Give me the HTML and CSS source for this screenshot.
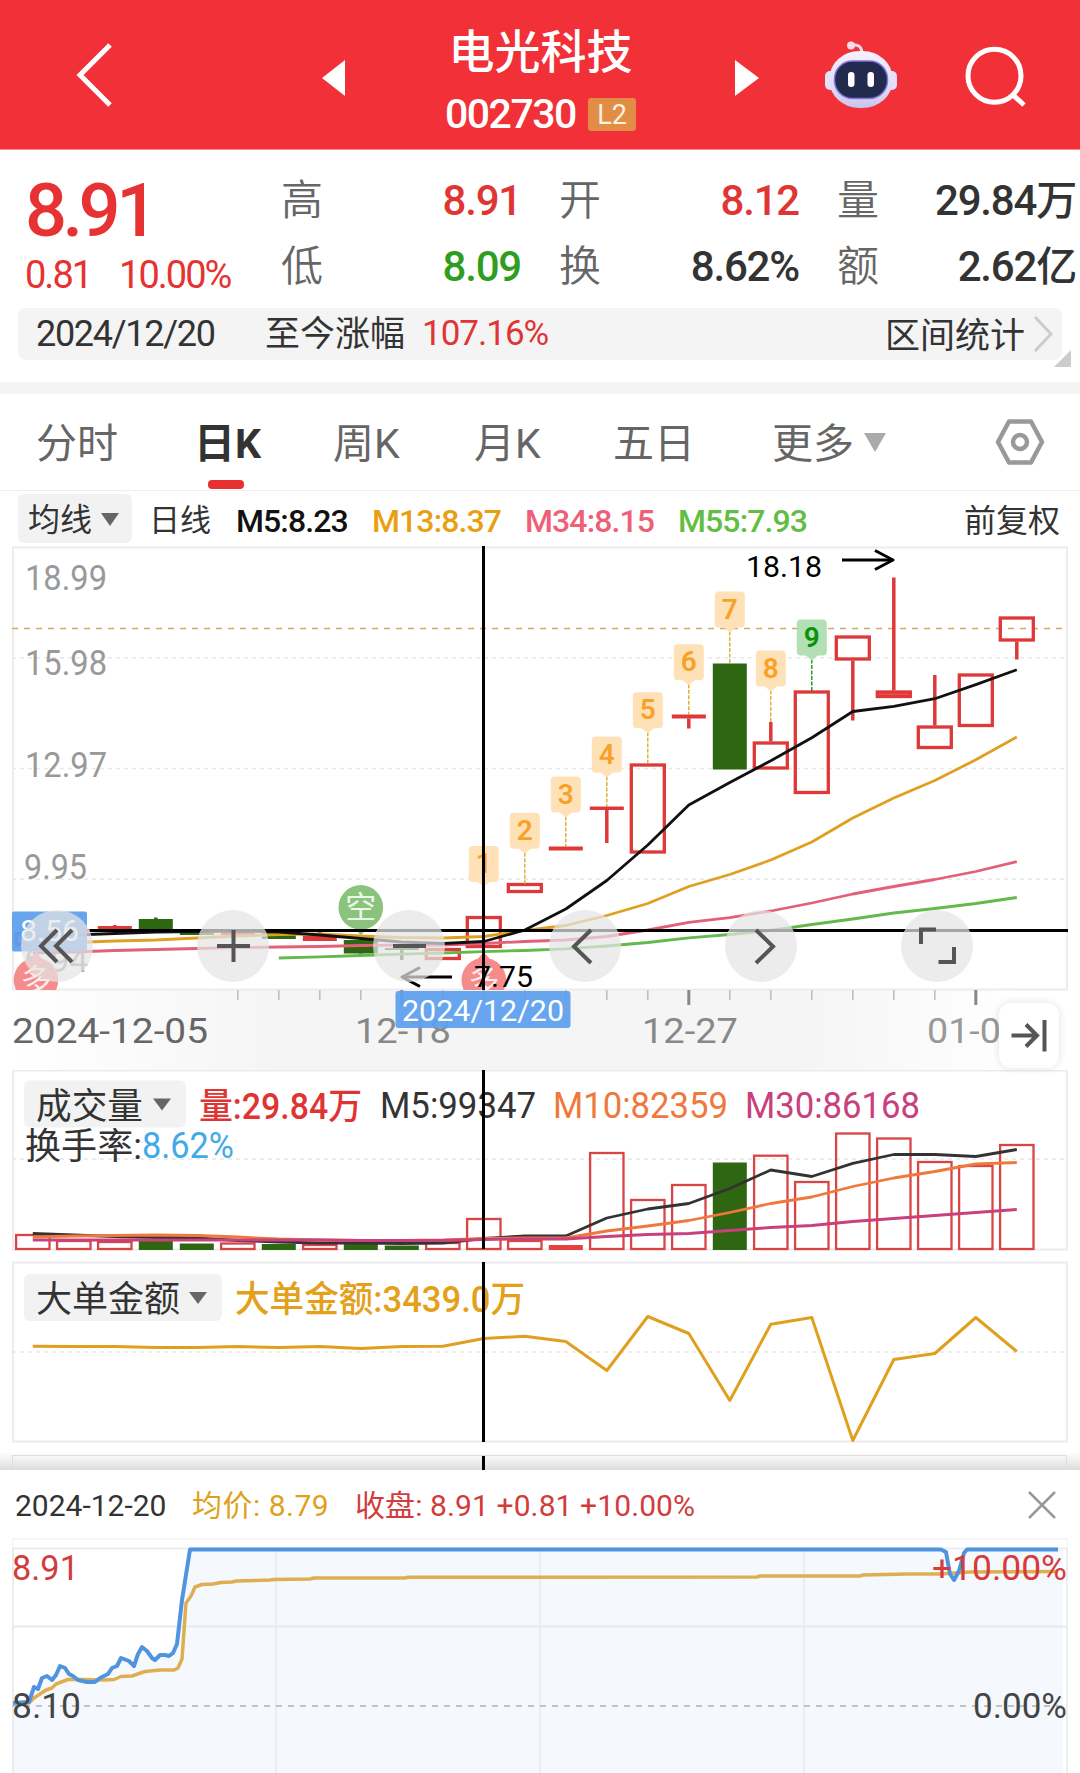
FILE: index.html
```html
<!DOCTYPE html>
<html lang="zh-CN">
  <head>
    <meta charset="UTF-8" />
    <meta name="viewport" content="width=device-width, initial-scale=1.0" />
    <title>电光科技 002730</title>
    <link rel="stylesheet" href="styles.css">
  </head>
  <body>
    <header class="topbar">
      <svg class="back" width="44" height="72" viewBox="0 0 44 72"><path d="M37 6 L7 36 L37 66" /></svg>
      <svg class="arrow" width="24" height="36" viewBox="0 0 24 36"><path d="M23 0 V36 L0 18 Z" /></svg>
      <div class="stock">
        <h1>电光科技</h1>
        <p><span class="code">002730</span><span class="level">L2</span></p>
      </div>
      <svg class="arrow" width="24" height="36" viewBox="0 0 24 36"><path d="M0 0 V36 L24 18 Z" /></svg>
      <svg class="robot" width="74" height="70" viewBox="824 40 74 70">
        <defs>
          <linearGradient id="shell" x1="0" y1="0" x2="0" y2="1">
            <stop offset="0" stop-color="#f6f2ff" />
            <stop offset="0.7" stop-color="#dcd8f6" />
            <stop offset="1" stop-color="#c9c4ec" />
          </linearGradient>
        </defs>
        <path d="M853 45 Q862 44 862 54" fill="none" stroke="#f0dcea" stroke-width="3" />
        <circle cx="851" cy="45.5" r="4" fill="#f5dce6" />
        <rect x="825" y="71" width="12" height="19" rx="5" fill="#e4e0fa" />
        <rect x="885" y="71" width="12" height="19" rx="5" fill="#e4e0fa" />
        <rect x="829.5" y="51" width="63" height="57" rx="30" ry="27" fill="url(#shell)" />
        <rect x="834.5" y="61" width="53" height="37.5" rx="18" fill="#222a4e" stroke="#8276dc" stroke-width="1.5" />
        <rect x="848" y="72" width="6.5" height="15" rx="3.2" fill="#fff" />
        <rect x="867.5" y="72" width="6.5" height="15" rx="3.2" fill="#fff" />
      </svg>
      <svg class="search" width="64" height="64" viewBox="964 46 64 64">
        <circle cx="994.5" cy="75.7" r="26.5" />
        <path d="M1013 95 L1024 105" />
      </svg>
    </header>

    <section class="quote">
      <div class="price">
        <strong>8.91</strong>
        <p><span>0.81</span><span>10.00%</span></p>
      </div>
      <dl class="figures">
        <dt>高</dt><dd class="up">8.91</dd>
        <dt>开</dt><dd class="up">8.12</dd>
        <dt>量</dt><dd>29.84<i>万</i></dd>
        <dt>低</dt><dd class="down">8.09</dd>
        <dt>换</dt><dd>8.62%</dd>
        <dt>额</dt><dd>2.62<i>亿</i></dd>
      </dl>
    </section>

    <section class="range">
      <div class="range-bar">
        <span class="day">2024/12/20</span>
        <span class="since">至今涨幅</span>
        <span class="rise">107.16%</span>
        <span class="stats">区间统计</span>
        <svg width="22" height="36" viewBox="0 0 22 36"><path d="M2 1 L18 18 L2 35" /></svg>
      </div>
      <i class="corner"></i>
    </section>

    <nav class="tabs">
      <span>分时</span>
      <span class="active">日K</span>
      <span>周K</span>
      <span>月K</span>
      <span>五日</span>
      <span>更多<i class="caret"></i></span>
      <svg width="52" height="48" viewBox="0 0 52 48">
        <path d="M15 3.5 H37 L48 24 L37 44.5 H15 L4 24 Z" />
        <circle cx="26" cy="24" r="7" />
      </svg>
    </nav>

    <section class="averages">
      <span class="chip">均线<i class="caret"></i></span>
      <span class="line-type">日线</span>
      <span class="m5">M5:8.23</span>
      <span class="m13">M13:8.37</span>
      <span class="m34">M34:8.15</span>
      <span class="m55">M55:7.93</span>
      <span class="adjust">前复权</span>
    </section>

    <main class="charts">
      <svg id="kline" width="1080" height="524" viewBox="0 546 1080 524"></svg>
      <svg id="volume" width="1080" height="190" viewBox="0 1070 1080 190"></svg>
      <svg id="orders" width="1080" height="192" viewBox="0 1260 1080 192"></svg>
      <div class="next-panel"><i></i></div>

      <div class="tools">
        <button><svg viewBox="0 0 72 72"><path d="M36 20 L20 36 L36 52 M51 20 L35 36 L51 52" /></svg></button>
        <button><svg viewBox="0 0 72 72"><path d="M20 36 H53 M36.5 20 V52" /></svg></button>
        <button><svg viewBox="0 0 72 72"><path d="M20 36 H53" /></svg></button>
        <button><svg viewBox="0 0 72 72"><path d="M42 20 L25 36.5 L42 53" /></svg></button>
        <button><svg viewBox="0 0 72 72"><path d="M31 20 L48 36.5 L31 53" /></svg></button>
        <button><svg viewBox="0 0 72 72"><path d="M20 34 V19.5 H35 M53 37 V52 H37.5" /></svg></button>
      </div>
      <button class="to-end"><svg viewBox="0 0 60 65"><path d="M12.5 32.5 H38 M27 21.5 L38 32.5 L27 43.5 M45.5 17 V48.5" /></svg></button>
    </main>

    <section class="sheet">
      <div class="sheet-head">
        <span>2024-12-20</span>
        <span class="avg">均价: 8.79</span>
        <span class="close-price">收盘: 8.91 +0.81 +10.00%</span>
        <svg width="28" height="28" viewBox="0 0 28 28"><path d="M1 1 L27 27 M27 1 L1 27" /></svg>
      </div>
      <svg id="intraday" width="1080" height="235" viewBox="0 1538 1080 235"></svg>
    </section>

    <script src="script.js"></script>
  </body>
</html>
```
FILE: styles.css
```css
body {
  margin: 0;
  width: 1080px;
  height: 1773px;
  overflow: hidden;
  background-color: #fff;
  color: #333;
  font-family: Roboto, "Noto Sans CJK SC", sans-serif;
}

h1,
p,
dl,
dd {
  margin: 0;
}

i {
  font-style: normal;
}

svg {
  display: block;
}

button {
  border: none;
  padding: 0;
}

/* top bar */
.topbar {
  display: grid;
  grid-template-columns: 322px 24px 389px 24px 65px 74px 66px 64px;
  height: 149px;
  background-color: #f23038;
  border-bottom: 1px solid #f88a8e;
  color: #fff;
}

.back {
  margin: 39px 0 0 73px;
  fill: none;
  stroke: #fff;
  stroke-width: 5;
}

.arrow {
  margin-top: 60px;
  fill: #fff;
}

.robot {
  grid-column: 6;
  margin-top: 40px;
}

.search {
  grid-column: 8;
  margin-top: 46px;
  fill: none;
  stroke: #fff;
  stroke-width: 5;
}

.stock {
  text-align: center;
}

.stock h1 {
  margin-top: 22px;
  height: 60px;
  line-height: 60px;
  font-size: 46px;
  font-weight: 500;
}

.stock p {
  display: flex;
  align-items: center;
  margin: 9px 0 0 99px;
  height: 46px;
}

.code {
  width: 143px;
  text-align: left;
  font-size: 41px;
  font-weight: 500;
  letter-spacing: -1.5px;
}

.level {
  width: 48px;
  height: 33px;
  line-height: 34px;
  border-radius: 3px;
  background-color: #e28d45;
  color: #fff2de;
  font-size: 27px;
}

/* quote */
.quote {
  display: flex;
  height: 158px;
}

.price {
  width: 256px;
  padding-left: 25px;
  color: #e63232;
}

.price strong {
  display: block;
  margin-top: 19px;
  height: 85px;
  line-height: 84px;
  font-size: 74px;
  font-weight: 500;
  letter-spacing: -4.5px;
}

.price p {
  display: flex;
  gap: 28px;
  line-height: 43px;
  font-size: 38px;
  letter-spacing: -2px;
}

.figures {
  display: grid;
  grid-template-columns: 42px 198px 38px 42px 198px 38px 42px 197px;
  grid-template-rows: 66px 66px;
  padding-top: 18px;
  line-height: 66px;
}

.figures dt {
  font-size: 42px;
  font-weight: 350;
  color: #666;
}

.figures dt:nth-of-type(3n + 2) {
  grid-column: 4;
}

.figures dt:nth-of-type(3n) {
  grid-column: 7;
}

.figures dd {
  text-align: right;
  font-size: 42px;
  font-weight: 500;
  letter-spacing: -1.2px;
  white-space: nowrap;
}

.figures i {
  font-size: 41px;
}

.up {
  color: #e03535;
}

.down {
  color: #2f9d20;
}

.range {
  position: relative;
  height: 74px;
  border-bottom: 12px solid #f4f4f4;
}

.range-bar {
  display: flex;
  align-items: center;
  margin: 0 18px;
  height: 52px;
  line-height: 52px;
  border-radius: 8px;
  background-color: #f4f4f4;
  font-size: 35px;
}

.day {
  width: 229px;
  padding-left: 18px;
  font-size: 36px;
  letter-spacing: -1.3px;
}

.since {
  width: 157px;
  padding-top: 2px;
}

.rise {
  color: #e03535;
  letter-spacing: -1px;
}

.stats {
  margin: 6px 8px 0 auto;
}

.range-bar svg {
  margin: 0 7px 0 0;
  fill: none;
  stroke: #ccc;
  stroke-width: 3;
}

.corner {
  position: absolute;
  left: 1054px;
  top: 42px;
  border-left: 17px solid transparent;
  border-bottom: 17px solid #ccc;
}

/* period tabs */
.tabs {
  display: grid;
  grid-template-columns: 160px 137px 141px 139px 159px 222px 52px;
  height: 96px;
  padding-left: 36px;
  line-height: 100px;
  border-bottom: 1px solid #eee;
  font-size: 41px;
  color: #666;
}

.caret {
  display: inline-block;
  margin-left: 9px;
  border: 11px solid transparent;
  border-top: 19px solid #aaa;
  border-bottom: none;
}

.tabs .caret {
  margin-left: 10px;
  vertical-align: 6px;
}

.tabs .active {
  margin-left: -2px;
  color: #333;
  font-weight: 700;
}

.active::after {
  content: "";
  display: block;
  width: 36px;
  height: 9px;
  margin: -14px 0 0 14px;
  border-radius: 4px;
  background-color: #e63030;
}

.tabs svg {
  margin-top: 24px;
  fill: none;
  stroke: #999;
  stroke-width: 4.5;
  stroke-linejoin: round;
}

/* moving average row */
.averages {
  display: grid;
  grid-template-columns: 131px 87px 136px 153px 153px 286px 100px;
  height: 55px;
  padding-left: 18px;
  line-height: 60px;
  font-size: 32px;
  font-weight: 500;
  letter-spacing: -0.9px;
}

.chip {
  width: 104px;
  height: 49px;
  margin-top: 3px;
  padding-left: 10px;
  line-height: 52px;
  border-radius: 6px;
  background-color: #f2f2f2;
  font-weight: 400;
  letter-spacing: 0;
}

.chip .caret {
  border-width: 13px 9px 0;
  border-top-color: #666;
  vertical-align: 5px;
}

.line-type,
.adjust {
  font-weight: 400;
  font-size: 31px;
  letter-spacing: 0;
}

.adjust {
  font-size: 32px;
}

.m5 {
  color: #111;
}

.m13 {
  color: #e8a010;
}

.m34 {
  color: #ee6078;
}

.m55 {
  color: #62be42;
}

/* charts */
.charts {
  position: relative;
  height: 924px;
}

.tools {
  position: absolute;
  left: 21px;
  top: 364px;
  display: flex;
  gap: 104px;
}

.tools button {
  width: 72px;
  height: 72px;
  border-radius: 50%;
  background-color: rgba(229, 229, 229, 0.72);
}

.tools svg,
.to-end svg {
  fill: none;
  stroke: #555;
  stroke-width: 4;
}

.to-end {
  position: absolute;
  left: 999px;
  top: 457px;
  width: 60px;
  height: 65px;
  border-radius: 12px;
  background-color: #fff;
  box-shadow: 0 0 8px rgba(0, 0, 0, 0.12);
}

.next-panel {
  height: 18px;
  background: linear-gradient(#fff, #ddd);
}

.next-panel::before {
  content: "";
  display: block;
  width: 1053px;
  height: 14px;
  margin-left: 12px;
  border: 1px solid #dedede;
  border-width: 1px 1px 0;
  transform: translateY(3px);
}

.next-panel i {
  display: block;
  width: 3px;
  height: 15px;
  margin: -12px 0 0 482px;
  background-color: #000;
}

/* intraday sheet */
.sheet {
  position: relative;
  height: 303px;
  background-color: #fff;
}

.sheet-head {
  display: grid;
  grid-template-columns: 177px 163px 673px 28px;
  height: 68px;
  padding-left: 15px;
  line-height: 71px;
  font-size: 30px;
}

.sheet-head svg {
  margin-top: 21px;
  stroke: #999;
  stroke-width: 2.5;
}

.avg {
  color: #dfa020;
  letter-spacing: 0.5px;
}

.close-price {
  color: #d23c3c;
  letter-spacing: 0.1px;
}
```
FILE: script.js
```js
const STEP = 41;
const px = (i) => 32.8 + i * STEP;
const RED = "#de3838";
const GREEN = "#2f6612";

const line = (x1, y1, x2, y2, color, w = 2, dash = "") =>
  `<line x1="${x1}" y1="${y1}" x2="${x2}" y2="${y2}" stroke="${color}" stroke-width="${w}" stroke-dasharray="${dash}"/>`;

const rect = (x, y, w, h, fill, extra = "") =>
  `<rect x="${x}" y="${y}" width="${w}" height="${h}" fill="${fill}" ${extra}/>`;

// text stretched between its left and right edges
const label = (str, x1, x2, y, size, color, weight = 400) =>
  `<text x="${x1}" y="${y}" font-size="${size}" fill="${color}" font-weight="${weight}" textLength="${x2 - x1}" lengthAdjust="spacingAndGlyphs">${str}</text>`;

const poly = (pts, color, w = 2.8) =>
  `<polyline points="${pts.map((p) => p.join(",")).join(" ")}" fill="none" stroke="${color}" stroke-width="${w}" stroke-linejoin="round"/>`;

const series = (ys, color, start = 0, w = 2.8) =>
  poly(ys.map((y, i) => [px(i + start), y]), color, w);

const frame = (top, bottom) =>
  rect(13, top, 1054, bottom - top, "none", 'stroke="#ececec" stroke-width="2"');

const grid = (y) => line(12, y, 1067, y, "#e8e8e8", 1.5, "4 4");

/* ---------- daily K ---------- */
// [body top, body bottom, high, low, style]  h: hollow, r: red, g: green
const candles = [
  [932, 946, 932, 946, "h"], [929, 932, 929, 932, "r"], [926, 930, 925, 930, "r"],
  [919, 930, 917.5, 930, "g"], [931, 935, 931, 935, "g"], [930, 935, 930, 935, "r"],
  [932, 939, 932, 939, "g"], [936, 941, 932, 941, "r"], [940, 953.5, 940, 955, "g"],
  [948, 950, 948, 960, "g"], [948, 960, 948, 960, "h"], [916, 948, 916, 948, "h"],
  [883, 893, 883, 893, "h"], [846.5, 850.5, 846.5, 850.5, "r"], [806.5, 810, 806.5, 843, "r"],
  [763.5, 853.5, 763.5, 853.5, "h"], [714.5, 718.5, 714.5, 728.5, "r"], [663.5, 769.5, 663.5, 769.5, "g"],
  [741.5, 769.5, 722, 769.5, "h"], [690.5, 794, 690.5, 794, "h"], [635.5, 660.5, 635.5, 720.5, "h"],
  [690.5, 698, 577.5, 698, "h"], [725.5, 749, 675, 749, "h"], [673.5, 727, 673.5, 727, "h"],
  [616.5, 641.5, 616.5, 659.5, "h"],
];

const ma5 = [936, 935, 933.5, 932, 931.5, 931, 932, 935, 938.5, 942, 943.5, 941.5, 930, 909, 880.5, 845, 805, 782.5, 760.7, 737.7, 711.5, 706.3, 698.7, 684.6, 669.8];
const ma13 = [944, 942.5, 941, 940, 938, 936, 934.5, 934, 936, 937.5, 938, 936.5, 930.5, 925.5, 915.5, 903.5, 886.5, 874.5, 860, 842, 818, 798, 780.5, 759.8, 737];
const ma34 = [953, 952, 950.5, 949.5, 948.5, 947.5, 947, 946.5, 945.5, 945.2, 945, 943.5, 941.5, 940, 936.5, 930, 922.3, 917.6, 911, 903, 894, 886.5, 879.5, 871.5, 861.7];
const ma55 = [958, 956.8, 955.5, 954.2, 953, 951.6, 950.5, 948.8, 946, 942.5, 937.8, 934.5, 930.5, 924.5, 919, 913, 908.5, 903.5, 897.5];

// nine-turn counters: top of the badge, end of the dotted lead
const turns = [
  [846, 887], [812.8, 884], [776.5, 847], [736.5, 807], [692.3, 764],
  [644.3, 715], [591.6, 664], [650.5, 722], [619.5, 691],
];

function drawCandle([top, bottom, high, low, style], i) {
  const x = px(i);
  const color = style === "g" ? GREEN : RED;
  let out = "";
  if (high < top) out += line(x, high, x, top, color, 3.5);
  if (low > bottom) out += line(x, bottom, x, low, color, 3.5);
  if (style === "h") {
    out += rect(x - 16.5, top + 1.5, 33, bottom - top - 3, bottom - top < 8 ? "#f05050" : "none", `stroke="${color}" stroke-width="3.3"`);
  } else {
    out += rect(x - 17, top, 34, bottom - top, color);
  }
  return out;
}

function drawTurn([top, end], i) {
  const x = px(i + 11);
  const last = i === 8;
  const fill = last ? "#b2dfb4" : "#ffe1b8";
  return (
    line(x, top + 40, x, end, last ? "#0a8a0a" : "#d9a520", 1.3, "4 1.5") +
    `<path d="M${x - 11} ${top} h22 q4 0 4 4 v28 q0 4 -4 4 h-5 l-6 5 l-6 -5 h-5 q-4 0 -4 -4 v-28 q0 -4 4 -4 z" fill="${fill}"/>` +
    `<text x="${x}" y="${top + 27}" text-anchor="middle" font-size="28" font-weight="600" fill="${last ? "#089308" : "#f8a128"}">${i + 1}</text>`
  );
}

function drawSignal(x, y, text, fill, tip) {
  return (
    `<path d="M${x - 7} ${y + tip * 20} L${x} ${y + tip * 28} L${x + 7} ${y + tip * 20} Z" fill="${fill}"/>` +
    `<circle cx="${x}" cy="${y}" r="22.3" fill="${fill}"/>` +
    `<text x="${x}" y="${y + 11}" text-anchor="middle" font-size="31" fill="#fff" opacity="0.85">${text}</text>`
  );
}

let k = `<defs>
  <linearGradient id="axis"><stop offset="0" stop-color="#fff"/><stop offset="0.25" stop-color="#f5f5f5"/><stop offset="0.75" stop-color="#f5f5f5"/><stop offset="0.96" stop-color="#fff"/></linearGradient>
  <clipPath id="plot"><rect x="12" y="546" width="1056" height="444"/></clipPath>
</defs>`;
k += rect(12, 990, 1055, 80, "url(#axis)");
k += frame(547.5, 989.5);
k += [657.8, 768.5, 879.3].map(grid).join("");
k += line(12, 628.5, 1067, 628.5, "#d6a868", 1.7, "6 6");
k += label("18.99", 25, 107, 589.5, 35, "#999");
k += label("15.98", 25, 107, 674.5, 35, "#999");
k += label("12.97", 25, 107, 776.5, 35, "#999");
k += label("9.95", 24, 87, 878.5, 35, "#999");
k += label("6.94", 24, 88, 971.5, 35, "#999");
k += candles.map(drawCandle).join("");
k += series(ma55, "#64b84c", 6) + series(ma34, "#e26078") + series(ma13, "#dfa020") + series(ma5, "#111");
k += turns.map(drawTurn).join("");
k += `<g clip-path="url(#plot)">` +
  drawSignal(px(8), 907.4, "空", "#8ac47c", 1) +
  drawSignal(36, 980, "多", "#f58b8b", -1) +
  drawSignal(px(11), 980, "多", "#f58b8b", -1) + `</g>`;
k += label("18.18", 746, 822, 577, 30, "#000");
k += poly([[842, 560], [893, 560]], "#000", 3) + poly([[875, 550.5], [893, 560], [875, 569.5]], "#000", 3);
k += label("7.75", 474, 533, 986.5, 30, "#000");
k += poly([[452, 977], [402, 977]], "#000", 3) + poly([[420, 967.5], [402, 977], [420, 986.5]], "#000", 3);

for (let i = 5; i <= 23; i++) {
  const major = (i - 9) % 7 === 0;
  k += line(px(i), 990, px(i), major ? 1005 : 1000, major ? "#888" : "#bbb", major ? 3 : 1.5);
}
k += label("2024-12-05", 12, 208, 1043, 35, "#666");
k += label("12-18", 355, 451, 1043, 35, "#888");
k += label("12-27", 642, 738, 1043, 35, "#888");
k += label("01-07", 927, 1022, 1043, 35, "#999");

// crosshair with its tags
k += rect(12, 911.5, 75, 40, "#5f9fee", 'rx="2" opacity="0.94"');
k += label("8.56", 20, 79, 941, 30, "#fff");
k += line(90, 930.5, 1068, 930.5, "#000", 3);
k += line(483.5, 546, 483.5, 990, "#000", 3);
k += rect(395.5, 991, 175, 37, "#5f9fee", 'rx="3" opacity="0.94"');
k += label("2024/12/20", 402, 564, 1020.5, 30, "#fff");
document.getElementById("kline").innerHTML = k;

/* ---------- volume ---------- */
const volumes = [
  [1234, "h"], [1240, "h"], [1241, "h"], [1240, "g"], [1243.5, "g"], [1242.5, "h"], [1244, "g"],
  [1244, "h"], [1243, "g"], [1245.5, "g"], [1242, "h"], [1218, "h"], [1240, "h"], [1245, "r"],
  [1152, "h"], [1199, "h"], [1184, "h"], [1162.5, "g"], [1154.7, "h"], [1181, "h"], [1132.5, "h"],
  [1137.5, "h"], [1161, "h"], [1165, "h"], [1144, "h"],
];
const chip = (y, w) => rect(24, y, w, 47, "#f2f2f2", 'rx="6"');
const caret = (x, y) => `<path d="M${x} ${y} h18 l-9 12 z" fill="#666"/>`;

let v = frame(1070.5, 1249.5) + grid(1159);
v += chip(1080.5, 162) + label("成交量", 36, 143, 1119, 36, "#333") + caret(153, 1098.5);
v += label("量:29.84万", 199, 362, 1118.5, 36, "#e03434", 500);
v += label("M5:99347", 380, 536, 1118, 36, "#333", 450);
v += label("M10:82359", 553, 728, 1118, 36, "#f0783c", 450);
v += label("M30:86168", 745, 920, 1118, 36, "#c8407c", 450);
v += label("换手率:", 25, 142, 1159, 36, "#333");
v += label("8.62%", 142, 234, 1158, 36, "#42aae6", 450);
volumes.forEach(([top, style], i) => {
  if (style === "h") v += rect(px(i) - 16.7, top + 1, 33.4, 1249 - top - 1, "none", 'stroke="#d94545" stroke-width="2.3"');
  else v += rect(px(i) - 17, top, 34, 1250 - top, style === "g" ? GREEN : "#e64040");
});
v += series([1233.5, 1235, 1236.5, 1237.5, 1238, 1240.5, 1242, 1243, 1243, 1243.5, 1243, 1238.5, 1236, 1236, 1218, 1209, 1203.5, 1188.5, 1170, 1176.5, 1163.3, 1154.5, 1154.5, 1156.5, 1149.5], "#333");
v += series([1237, 1236, 1235.5, 1235, 1235.5, 1237, 1239, 1240, 1240.5, 1240.5, 1240, 1238.5, 1238, 1238, 1231, 1226, 1220.5, 1212.5, 1203.5, 1197, 1186.5, 1178, 1171.5, 1164, 1162.5], "#f0783c");
v += series([1240, 1240, 1240, 1240, 1240, 1240, 1240, 1240, 1240.5, 1240.5, 1240.5, 1239.5, 1239, 1239, 1236.5, 1234.5, 1233.5, 1230.5, 1227.5, 1225.5, 1221.5, 1218.5, 1215.5, 1212.5, 1209.5], "#c8407c");
v += line(483.5, 1070, 483.5, 1249, "#000", 3);
document.getElementById("volume").innerHTML = v;

/* ---------- big orders ---------- */
let o = frame(1262.5, 1441.5) + grid(1352);
o += chip(1274, 198) + label("大单金额", 36, 180, 1312, 36, "#333") + caret(189, 1292);
o += label("大单金额:3439.0万", 235, 525, 1311.5, 36, "#e3a018", 500);
o += series([1346.3, 1346.5, 1346.5, 1347.5, 1347.5, 1346.5, 1347.5, 1346.5, 1348.5, 1346.5, 1346.3, 1338.5, 1336.3, 1341.5, 1370.5, 1316.5, 1333.5, 1400.5, 1324.3, 1317.5, 1440.5, 1359.5, 1353.5, 1317.5, 1351.5], "#dfa020", 0, 3);
o += line(483.5, 1262, 483.5, 1442, "#000", 3);
document.getElementById("orders").innerHTML = o;

/* ---------- intraday ---------- */
const price = [
  [13, 1703], [29, 1702], [34, 1687], [38, 1689], [42, 1678], [47, 1676], [52, 1680], [56, 1675], [60, 1666],
  [65, 1668], [69, 1674], [73, 1676], [78, 1680], [87, 1682], [95, 1682], [100, 1678], [108, 1674], [112, 1668],
  [117, 1666], [121, 1658], [129, 1661], [134, 1666], [138, 1654], [142, 1647], [147, 1651], [152, 1658],
  [155, 1660], [160, 1655], [165, 1655], [169, 1656], [173, 1653], [177, 1644], [182, 1600], [190, 1549.5],
  [941, 1549.5], [946, 1552], [950, 1574], [954, 1580], [959, 1571], [964, 1553], [967, 1549.5], [1058, 1549.5],
];
const average = [
  [17, 1705], [29, 1703], [34, 1698], [46, 1690], [52, 1688], [56, 1684], [68, 1679.5], [86, 1679.5],
  [104, 1680], [114, 1679.5], [121, 1676.5], [132, 1676], [145, 1671.5], [160, 1670], [174, 1670],
  [178, 1668], [182, 1659], [186, 1603], [191, 1596], [195, 1587], [202, 1584.5], [213, 1584], [221, 1582.5],
  [232, 1582], [236, 1581], [270, 1580], [274, 1579.5], [310, 1579], [314, 1578], [405, 1578], [408, 1577.3],
  [757, 1577], [760, 1576], [860, 1576], [863, 1575], [908, 1574], [940, 1574], [970, 1572], [1058, 1571.5],
];

let t = `<polygon points="${price.map((p) => p.join(",")).join(" ")} 1063,1549.5 1063,1773 13,1773" fill="#f5f9fe"/>`;
t += rect(12.5, 1539, 1055, 9.5, "none", 'stroke="#f5f5f5" stroke-width="1.5"');
t += rect(13, 1548.5, 1054, 240, "none", 'stroke="#e9ebee" stroke-width="1.8"');
t += line(12, 1626.5, 1067, 1626.5, "#e6e9ee", 1.8);
t += [276, 540, 804].map((x) => line(x, 1549, x, 1773, "#e6e9ee", 1.5)).join("");
t += line(12, 1706, 1067, 1706, "#bfc2c6", 2, "6 6");
t += poly(average, "#dfae50", 3.5) + poly(price, "#5094e0", 4);
t += label("8.91", 12, 79, 1579.5, 35, "#d23c3c");
t += label("+10.00%", 932, 1067, 1579.5, 35, "#d63a3a");
t += label("8.10", 12, 81, 1717.5, 35, "#444");
t += label("0.00%", 973, 1067, 1717.5, 35, "#444");
document.getElementById("intraday").innerHTML = t;
```
